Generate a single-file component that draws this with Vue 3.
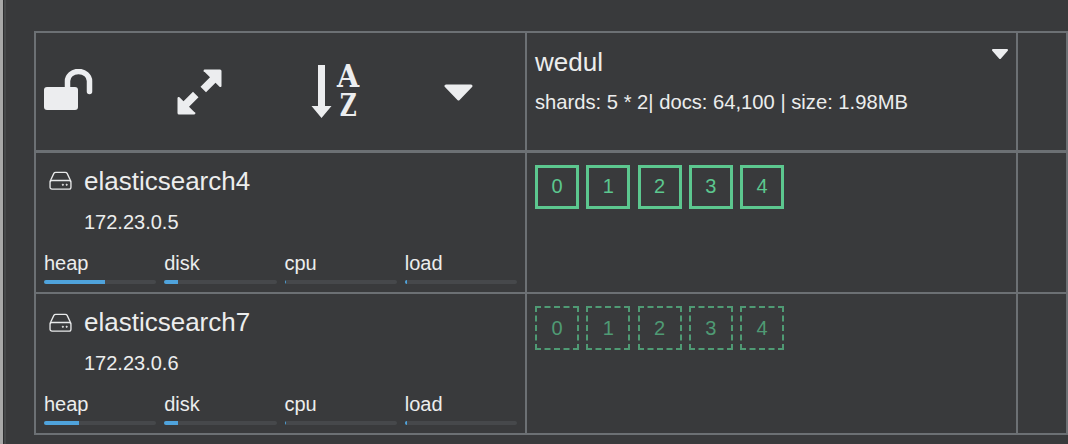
<script setup>
const nodes = [
  { name: 'elasticsearch4', ip: '172.23.0.5', replica: false, stats: [['heap', 54.5], ['disk', 12], ['cpu', 1], ['load', 2]] },
  { name: 'elasticsearch7', ip: '172.23.0.6', replica: true, stats: [['heap', 31], ['disk', 12], ['cpu', 1], ['load', 2]] }
]
const shards = [0, 1, 2, 3, 4]
</script>

<template>
  <div class="page">
    <table class="grid">
      <colgroup>
        <col class="c1" />
        <col class="c2" />
        <col />
      </colgroup>
      <thead>
        <tr>
          <th class="tools">
            <div class="toolbar">
              <svg class="lock" width="49" height="41" viewBox="0 0 49 41">
                <path fill="#ecedef" d="M3 18h28a3 3 0 0 1 3 3v17a3 3 0 0 1-3 3H3a3 3 0 0 1-3-3V21a3 3 0 0 1 3-3z" />
                <path fill="none" stroke="#ecedef" stroke-width="5.500" stroke-linecap="round" d="M23.500 18V12a11 9.500 0 0 1 22 0v10.500" />
              </svg>
              <svg class="expand" width="45" height="46" viewBox="0 0 45 46">
                <path fill="#ecedef" d="M28 .5h15a1.500 1.500 0 0 1 1.500 1.500v15a1.200 1.200 0 0 1-2 .8l-4-4-9.500 9.500-5.500-5.500 9.500-9.500-5.300-5.200a1.200 1.200 0 0 1 .3-2.600z" />
                <path fill="#ecedef" d="M17 45.500H2A1.500 1.500 0 0 1 .5 44V29a1.200 1.200 0 0 1 2-.8l4 4 9.500-9.500 5.500 5.500-9.500 9.500 5.300 5.200a1.200 1.200 0 0 1-.3 2.600z" />
              </svg>
              <span class="sort">
                <svg class="arrow" width="21" height="53" viewBox="0 0 21 53">
                  <path fill="#ecedef" d="M7 0h7v41h6.500L10.500 53 .5 41H7z" />
                </svg>
                <span class="az"><span class="a">A</span><span class="z">Z</span></span>
              </span>
              <svg class="caret-big" width="29" height="17" viewBox="0 0 29 17">
                <path fill="#ecedef" stroke="#ecedef" stroke-width="3" stroke-linejoin="round" d="M2 2h25L14.500 15z" />
              </svg>
            </div>
          </th>
          <th class="index">
            <div class="index-head">
              <span class="index-name">wedul</span>
              <svg class="caret-small" width="16" height="10" viewBox="0 0 16 10">
                <path fill="#ecedef" stroke="#ecedef" stroke-width="2" stroke-linejoin="round" d="M1 1h14L8 9z" />
              </svg>
            </div>
            <div class="index-meta">shards: 5 * 2| docs: 64,100 | size: 1.98MB</div>
          </th>
          <th></th>
        </tr>
      </thead>
      <tbody>
        <tr v-for="node in nodes" :key="node.name">
          <td class="node">
            <div class="node-title">
              <svg width="23" height="19" viewBox="0 0 24 20" fill="none" stroke="#e8e9ea" stroke-width="1.400">
                <path d="M1 11 5 2.500Q5.500 1.500 7 1.500h10q1.500 0 2 1L23 11" />
                <rect x="1" y="10" width="22" height="9" rx="2" />
                <circle cx="14.500" cy="14.500" r=".7" fill="#e8e9ea" stroke-width=".8" />
                <circle cx="18.500" cy="14.500" r=".7" fill="#e8e9ea" stroke-width=".8" />
              </svg>
              <span>{{ node.name }}</span>
            </div>
            <div class="ip">{{ node.ip }}</div>
            <div class="stats">
              <div v-for="s in node.stats" :key="s[0]" class="stat">
                <div class="stat-label">{{ s[0] }}</div>
                <div class="track"><div class="fill" :style="{ width: s[1] + '%' }"></div></div>
              </div>
            </div>
          </td>
          <td class="shards">
            <div class="shard-row">
              <div v-for="n in shards" :key="n" class="shard" :class="{ replica: node.replica }">{{ n }}</div>
            </div>
          </td>
          <td></td>
        </tr>
      </tbody>
    </table>
  </div>
</template>

<style>
html, body { margin: 0; background: #393a3c; overflow: hidden; }
</style>

<style scoped>
.page {
  box-sizing: border-box;
  width: 1068px;
  height: 444px;
  overflow: hidden;
  background: #393a3c;
  border-left: 3px solid #a8a8a8;
  box-shadow: inset 1px 0 #2c2d2f, inset 3px 0 #454749;
  padding: 31px 0 0 31px;
  font-family: "Liberation Sans", Arial, sans-serif;
  color: #eceded;
}
.grid {
  border-collapse: collapse;
  table-layout: fixed;
  width: 1034px;
}
.c1 { width: 491px; }
.c2 { width: 491px; }
th, td {
  border: 2px solid #6c7074;
  padding: 0;
  vertical-align: top;
  text-align: left;
  font-weight: 400;
}
thead tr { height: 119px; }
thead th { border-bottom-width: 3px; }
tbody tr { height: 141px; }
tbody tr:first-child { height: 142px; }
.tools { vertical-align: middle; }
.toolbar { display: flex; align-items: center; padding-left: 8px; }
.lock { margin-top: -3px; }
.expand { margin-left: 84px; margin-top: 1px; }
.sort { display: flex; margin-left: 89px; align-items: flex-start; gap: 4px; }
.arrow { margin-top: 3px; }
.az { display: flex; flex-direction: column; font-family: "DejaVu Serif", serif; font-weight: 700; font-size: 31px; line-height: 29px; color: #ecedef; align-items: center; }
.a { transform: scaleX(.92); }
.z { transform: scaleX(.75); }
.caret-big { margin-left: 84px; margin-top: 2px; }
.caret-small { margin-top: 2px; }
.index { padding: 14px 8px 0; }
.index-head { display: flex; justify-content: space-between; }
.index-name { font-size: 26px; line-height: 30px; }
.index-meta { font-size: 20.200px; line-height: 24px; margin-top: 13px; }
.node { padding: 13px 8px 0; }
.node-title { display: flex; align-items: center; font-size: 26px; line-height: 30px; padding-left: 5px; gap: 12px; }
.ip { font-size: 20px; line-height: 24px; padding-left: 40px; margin-top: 14px; }
.stats { display: flex; gap: 8px; margin-top: 18px; }
.stat { flex: 1; }
.stat-label { font-size: 20px; line-height: 23px; }
.track { height: 4px; background: #46484b; border-radius: 2px; margin-top: 5px; overflow: hidden; }
.fill { height: 100%; background: #4fa3dc; }
.shards { padding: 12px 8px 0; }
.shard-row { display: flex; gap: 7.250px; }
.shard {
  box-sizing: border-box;
  width: 44px;
  height: 44px;
  border: 3px solid #5cc78f;
  color: #5cc78f;
  font-size: 20px;
  display: flex;
  align-items: center;
  justify-content: center;
}
.shard.replica {
  border: 2px dashed #4f9a74;
  color: #4f9a74;
}
</style>
